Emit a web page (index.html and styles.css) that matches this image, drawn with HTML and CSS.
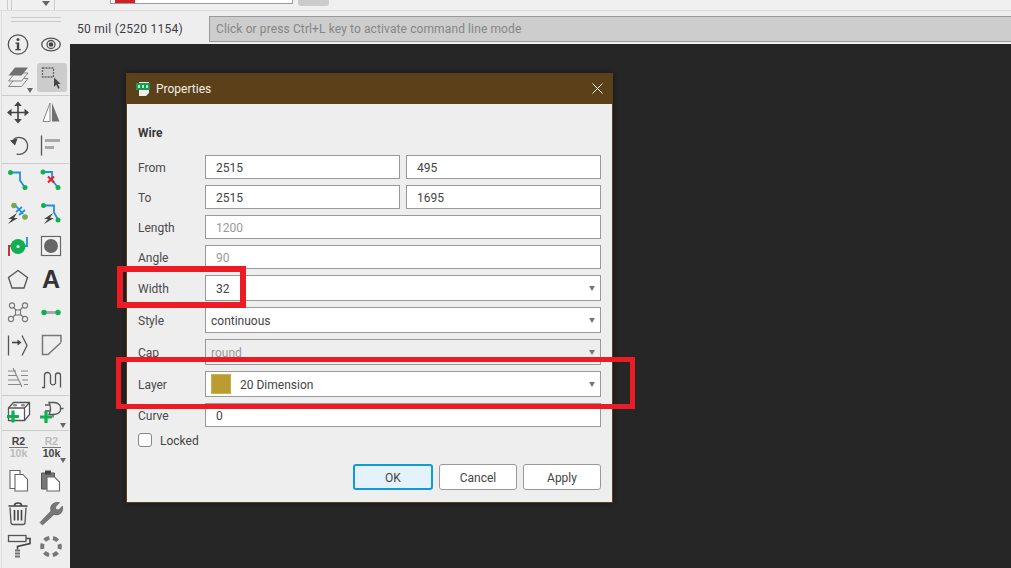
FILE: index.html
```html
<!DOCTYPE html>
<html lang="en">
<head>
<meta charset="utf-8">
<title>Properties</title>
<link rel="stylesheet" href="styles.css">
</head>
<body>
<header class="topbar">
  <div class="top-left"><i class="vbar"></i><i class="vbar"></i><i class="tri top-tri"></i><i class="vbar"></i></div>
  <div class="top-select"><i class="top-swatch"></i></div>
  <div class="top-btn"></div>
</header>
<div class="main">
  <aside class="sidebar">
    <div class="grip"></div>
    <div class="group">
      <div class="tool"><svg viewBox="0 0 33 33"><circle class="ln" cx="16" cy="16.500" r="9.700"/><circle class="fd" cx="16" cy="11.500" r="1.500"/><path class="fd" d="M13.500 14.500h3.700v6.500h1.500v1.200h-5.400V21h1.500v-5.300h-1.300z"/></svg></div>
      <div class="tool"><svg viewBox="0 0 33 33"><ellipse class="ln" cx="16" cy="16.500" rx="9.300" ry="6.300"/><circle class="ln" cx="16" cy="16.500" r="4"/><circle class="fd" cx="16" cy="16.500" r="2.300"/></svg></div>
      <div class="tool tool-more"><svg viewBox="0 0 33 33"><path class="lt" d="M6.500 25.500L13 17.500H26L19.500 25.500z"/><path class="lt" d="M6.500 20L13 12H26L19.500 20z"/><path class="fa" d="M6.500 14.500L13 6.500H26L19.500 14.500z"/></svg><i class="tri"></i></div>
      <div class="tool tool-active"><svg viewBox="0 0 33 33"><rect class="dash" x="7.500" y="7" width="11" height="9"/><path class="fd" d="M19 16.500v9.500l2.200-2.200 2.200 4 1.300-.7-2-4h3z"/></svg></div>
    </div>
    <div class="group">
      <div class="tool"><svg viewBox="0 0 33 33"><path class="ln2" d="M16 7v19M6.500 16.500h19"/><path class="fd" d="M16 5.500l3.800 4.500h-7.600zM16 27.500l3.800-4.500h-7.600zM5 16.500l4.500-3.800v7.600zM27 16.500l-4.500-3.800v7.600z"/></svg></div>
      <div class="tool"><svg viewBox="0 0 33 33"><path class="lt2" d="M15 7L8 25.500h7z"/><path class="fa" d="M17 7l7.500 18.500H17z"/></svg></div>
      <div class="tool"><svg viewBox="0 0 33 33"><path class="ln" d="M11.500 10.500a8.500 8.500 0 1 1 3 14.500"/><path class="fd" d="M8 11.500l7.500-2-2.500 7z"/></svg></div>
      <div class="tool"><svg viewBox="0 0 33 33"><path class="ln" d="M6.500 6.500v20"/><path class="bar" d="M10 11.500h15M10 18.500h9"/></svg></div>
    </div>
    <div class="group group-tight">
      <div class="tool"><svg viewBox="0 0 33 33"><path class="wire" d="M8.500 8.500H18v8l5 7"/><circle class="gd" cx="8.500" cy="8.500" r="2.500"/><circle class="gd" cx="23" cy="23.500" r="2.500"/></svg></div>
      <div class="tool"><svg viewBox="0 0 33 33"><path class="wire" d="M8 8h9v8l6 7.500"/><circle class="gd" cx="8" cy="8" r="2.500"/><circle class="gd" cx="23" cy="23.500" r="2.500"/><path class="rx" d="M13 12.500l6 6M19 12.500l-6 6"/></svg></div>
      <div class="tool"><svg viewBox="0 0 33 33"><path class="wire" d="M14 9l7 8"/><path class="wire" d="M14 15l6-5M17 18l6-5"/><circle class="ol" cx="12" cy="8.500" r="2.800"/><circle class="ol" cx="23" cy="20" r="2.800"/><path class="fd" d="M15 16l-9 6h4l-4 5 10-6h-4z"/></svg></div>
      <div class="tool"><svg viewBox="0 0 33 33"><path class="wire" d="M8.500 8.500H19v7l4 7"/><circle class="gd" cx="8.500" cy="8.500" r="2.500"/><circle class="gd" cx="23" cy="23" r="2.500"/><path class="fd" d="M18 16l-9 6h4l-4 5 10-6h-4z"/></svg></div>
      <div class="tool"><svg viewBox="0 0 33 33"><path class="redw" d="M7 26v-10h4"/><path class="wire" d="M25 7v9h-4"/><circle class="gd" cx="16" cy="16.500" r="7.500"/><circle class="wd" cx="16" cy="16.500" r="1.500"/></svg></div>
      <div class="tool"><svg viewBox="0 0 33 33"><rect class="pad" x="6.500" y="6.500" width="19" height="19"/><circle class="padc" cx="16" cy="16" r="7"/></svg></div>
      <div class="tool"><svg viewBox="0 0 33 33"><path class="ln" d="M16 7.500l9.500 7-3.500 10.500H10L6.500 14.500z"/></svg></div>
      <div class="tool"><svg viewBox="0 0 33 33"><text class="big-a" x="16" y="25">A</text></svg></div>
      <div class="tool"><svg viewBox="0 0 33 33"><path class="ln-n" d="M10 10l12 12M22 10L10 22"/><rect class="cb" x="13.500" y="14" width="5" height="5"/><circle class="cb" cx="10" cy="9.500" r="2.600"/><circle class="cb" cx="23" cy="9.500" r="2.600"/><circle class="cb" cx="9" cy="23" r="2.600"/><circle class="cb" cx="23" cy="23" r="2.600"/></svg></div>
      <div class="tool"><svg viewBox="0 0 33 33"><path class="bar" d="M9 16.500h14"/><circle class="gd" cx="9" cy="16.500" r="2.700"/><circle class="gd" cx="23" cy="16.500" r="2.700"/></svg></div>
      <div class="tool"><svg viewBox="0 0 33 33"><path class="ln" d="M6.500 6.500v20M20 6.500l5 10-5 10"/><path class="ln2" d="M10 13.500h7"/><path class="fd" d="M19.500 13.500l-4-3v6z"/></svg></div>
      <div class="tool"><svg viewBox="0 0 33 33"><path class="ln-g" d="M26 13V6.500H7.500v19H13l13-12"/></svg></div>
      <div class="tool"><svg viewBox="0 0 33 33"><path class="ln-s" d="M6 9h8M19 9h7M6 13.500h8M19 13.500h7M6 18h10M20 18h6M6 22.500h12M22 22.500h4M11 6l9 19"/></svg></div>
      <div class="tool"><svg viewBox="0 0 33 33"><path class="ln" d="M7 25.500h2.500v-12a3 3 0 0 1 6 0v8a3 3 0 0 0 5 0v-8a2.500 2.500 0 0 1 5 0v12"/></svg></div>
    </div>
    <div class="group">
      <div class="tool"><svg viewBox="0 0 33 33"><path class="chip" d="M6.500 12l5-5.500h16v12l-5 6h-16z"/><path class="ln" d="M6.500 12h16v13M22.500 12l5-5.500"/><ellipse class="hole" cx="13" cy="9.300" rx="2.200" ry="1.300"/><ellipse class="hole" cx="21" cy="9.300" rx="2.200" ry="1.300"/><path class="plus" d="M11 14.500v12M5 20.500h12"/></svg></div>
      <div class="tool tool-more"><svg viewBox="0 0 33 33"><path class="ln" d="M14 6.500h5a7 5 0 0 1 6.500 6 7 5 0 0 1-6.500 6h-5q3-6 0-12z"/><path class="ln" d="M10 9h5M10 15h5M25.500 12.500h3M18 18.500v3"/><path class="plus" d="M11 15v12M5 21h12"/></svg><i class="tri"></i></div>
    </div>
    <div class="group group-last">
      <div class="tool"><div class="rk"><b class="rk-on">R2</b><b class="rk-off rk-rule">10k</b></div></div>
      <div class="tool tool-more"><div class="rk"><b class="rk-off">R2</b><b class="rk-on rk-rule">10k</b></div><i class="tri"></i></div>
      <div class="tool"><svg viewBox="0 0 33 33"><path class="page" d="M8 6.500h10v18H8z"/><path class="page" d="M13 10.500h8l4.500 5V27H13z"/></svg></div>
      <div class="tool"><svg viewBox="0 0 33 33"><path class="clip" d="M6.500 9h13v16h-13z"/><path class="fd" d="M10 6.500h6v4h-6z"/><path class="page" d="M12 13h7.500l5 5v9H12z"/></svg></div>
      <div class="tool"><svg viewBox="0 0 33 33"><path class="ln" d="M8 10.500l1 15q0 2 2 2h10q2 0 2-2l1-15"/><path class="ln2" d="M6.500 9h19M12.500 8.500q0-2.500 3.500-2.500t3.500 2.500M12.500 13v10.500M16 13v10.500M19.500 13v10.500"/></svg></div>
      <div class="tool"><svg viewBox="0 0 33 33"><path class="wrench" d="M7.500 28l-2.500-2.500L16 14q-1.500-4.500 1.500-7t7-1.500L20.500 10l.5 2.500 2.500.5 4-4q1 4-1.500 7t-7 1.500z"/></svg></div>
      <div class="tool"><svg viewBox="0 0 33 33"><rect class="ln" x="6.500" y="5.500" width="17.500" height="6"/><path class="ln2" d="M24 8.500h4v5l-12.500 3v3"/><path class="fa" d="M13 19.500h5v8h-5z"/><path class="gapl" d="M13 22h5M13 25h5"/></svg></div>
      <div class="tool"><svg viewBox="0 0 33 33"><circle class="ring" cx="16" cy="16.500" r="8.800"/></svg></div>
    </div>
  </aside>
  <div class="workspace">
    <div class="statusbar">
      <span class="coords">50 mil (2520 1154)</span>
      <div class="cmdline">Click or press Ctrl+L key to activate command line mode</div>
    </div>
    <div class="canvas">
      <section class="dialog">
        <div class="titlebar">
          <svg class="app-ico" viewBox="0 0 14 16"><path class="ai-page" d="M3 1h10v11l-3 3H3z"/><rect class="ai-board" x="0" y="2" width="14" height="7"/><path class="ai-trace" d="M2 4v3h2V4zM6 4v3h2V4zM10 4v3h2V4z"/></svg>
          <span class="title">Properties</span>
          <svg class="close" viewBox="0 0 11 11"><path d="M.5.5l10 10M10.500.5l-10 10"/></svg>
        </div>
        <div class="dbody">
          <h2 class="heading">Wire</h2>
          <div class="form">
            <label>From</label><div class="pair"><div class="field">2515</div><div class="field">495</div></div>
            <label>To</label><div class="pair"><div class="field">2515</div><div class="field">1695</div></div>
            <label>Length</label><div class="field off">1200</div>
            <label>Angle</label><div class="field off">90</div>
            <label>Width</label><div class="field combo">32<i class="tri"></i></div>
            <label>Style</label><div class="field combo tight">continuous<i class="tri"></i></div>
            <label>Cap</label><div class="field combo tight off off-fill">round<i class="tri"></i></div>
            <label>Layer</label><div class="field combo tight"><i class="swatch"></i>20 Dimension<i class="tri"></i></div>
            <label>Curve</label><div class="field">0</div>
          </div>
          <div class="lock"><i class="check"></i><span class="lock-text">Locked</span></div>
          <div class="actions">
            <button class="btn btn-ok">OK</button>
            <button class="btn">Cancel</button>
            <button class="btn">Apply</button>
          </div>
        </div>
      </section>
      <div class="mark mark-width"></div>
      <div class="mark mark-layer"></div>
    </div>
  </div>
</div>
</body>
</html>
```
FILE: styles.css
```css
* { box-sizing: border-box; }
html, body { margin: 0; height: 100%; overflow: hidden; }
body {
  display: flex;
  flex-direction: column;
  width: 1011px;
  height: 568px;
  background: #eee;
  color: #444;
  font: 12px Roboto, "Noto Sans", sans-serif;
}
i { display: block; }

.topbar { height: 11px; flex: none; display: flex; background: #f0f0f0; border-bottom: 1px solid #ddd; overflow: hidden; }
.top-left { width: 110px; display: flex; position: relative; }
.vbar { position: absolute; top: 0; height: 10px; width: 1px; background: #ccc; }
.vbar:nth-child(1) { left: 7px; }
.vbar:nth-child(2) { left: 11px; }
.vbar:nth-child(4) { left: 54px; }
.top-tri { position: absolute; left: 42px; top: 1px; }
.top-select { width: 183px; height: 4px; background: #fff; border: 1px solid #999; border-top: 0; padding-left: 4px; }
.top-swatch { width: 20px; height: 3px; background: #d02020; }
.top-btn { width: 31px; height: 6px; margin-left: 5px; background: #ccc; border-radius: 0 0 3px 3px; }

.tri { width: 0; height: 0; border-left: 4px solid transparent; border-right: 4px solid transparent; border-top: 5px solid #666; }

.main { flex: 1; display: flex; min-height: 0; }

.sidebar { width: 69px; flex: none; padding: 0 1px 0 2px; background: #eee; border-left: 1px solid #ddd; margin-left: 1px; display: flex; flex-direction: column; align-items: stretch; }
.grip { height: 11px; flex: none; margin-top: 6px; margin-right: 8px; margin-left: 7px; border-top: 1px solid #ccc; }
.grip::after { content: ""; display: block; margin-top: 3px; border-top: 1px solid #ccc; }
.group { display: grid; width: 67px; grid-template-columns: 33px 33px; grid-auto-rows: 33px; border-bottom: 1px solid #ccc; margin-left: -2px; padding-bottom: 1px; }
.group-tight { padding-bottom: 0; }
.group-last { border: 0; }

.tool { position: relative; display: flex; align-items: center; justify-content: center; }
.tool svg { width: 33px; height: 33px; display: block; flex: none; }
.tool-more > .tri { position: absolute; right: 2px; bottom: 1px; border-left-width: 3px; border-right-width: 3px; border-top-width: 5px; }
.tool-active::before { content: ""; position: absolute; inset: 2px 1px 2px 2px; background: #ccc; border-radius: 3px; }
.tool-active svg { position: relative; }

.ln, .ln2, .lt, .lt2, .wire, .redw, .rx, .bar, .ln-g, .ln-s, .ln-n, .dash, .gapl, .plus { fill: none; }
.ln { stroke: #555; stroke-width: 1.300; }
.ln2 { stroke: #444; stroke-width: 1.600; }
.ln-n { stroke: #777; stroke-width: 1.100; }
.lt, .lt2 { stroke: #888; stroke-width: 1; }
.lt { fill: #eee; }
.lt2 { fill: #fff; }
.fd { fill: #444; }
.fa { fill: #707070; }
.dash { stroke: #666; stroke-width: 1.300; stroke-dasharray: 2 1; }
.bar { stroke: #a8a8a8; stroke-width: 3; }
.wire { stroke: #1e90e6; stroke-width: 1.800; }
.redw { stroke: #c8323c; stroke-width: 2; }
.rx { stroke: #e02030; stroke-width: 2; }
.gd { fill: #10b050; }
.ol { fill: #78a850; }
.wd { fill: #fff; }
.pad { fill: #f4f4f4; stroke: #666; stroke-width: 1.200; }
.padc { fill: #666; }
.big-a { font: bold 25px "Liberation Sans", sans-serif; fill: #333; text-anchor: middle; }
.cb { fill: #eee; stroke: #777; stroke-width: 1.100; }
.ln-g { stroke: #777; stroke-width: 1.500; }
.ln-s { stroke: #888; stroke-width: 1.100; }
.chip { fill: #fff; stroke: #555; stroke-width: 1.300; }
.hole { fill: #888; }
.plus { stroke: #10b050; stroke-width: 3.200; }
.page { fill: #fff; stroke: #666; stroke-width: 1.100; }
.clip { fill: #777; stroke: #555; stroke-width: 1; }
.wrench { fill: #777; stroke: #555; stroke-width: .6; }
.gapl { stroke: #eee; stroke-width: 1; }
.ring { fill: none; stroke: #777; stroke-width: 4; stroke-dasharray: 5.400 3.800; stroke-dashoffset: 2.700; }

.rk { display: flex; flex-direction: column; align-items: center; font: bold 10.500px/11px "Liberation Sans", sans-serif; }
.rk b { display: block; padding: 0 1px; }
.rk-on { color: #444; }
.rk-off { color: #bbb; }
.rk-rule { border-top: 1px solid #777; min-width: 16px; text-align: center; }

.workspace { flex: 1; min-width: 0; display: flex; flex-direction: column; }
.statusbar { height: 33px; flex: none; display: flex; align-items: center; padding: 3px 0 0 7px; background: #eee; }
.coords { width: 132px; flex: none; color: #3c3c46; letter-spacing: .28px; }
.cmdline { flex: 1; height: 26px; padding: 0 6px; line-height: 25px; background: #cdcdcd; border: 1px solid #999; border-right: 0; color: #858585; letter-spacing: .11px; }

.canvas { flex: 1; position: relative; background: #262626; }

.dialog { position: absolute; left: 56px; top: 29px; width: 487px; height: 430px; background: #eee; border: 1px solid #5c4019; box-shadow: 0 0 6px rgba(0,0,0,.45); display: flex; flex-direction: column; }
.titlebar { height: 30px; flex: none; display: flex; align-items: center; padding: 0 9px; background: #5c4019; color: #fff; }
.app-ico { width: 14px; height: 16px; flex: none; margin-right: 6px; }
.ai-page { fill: #eee; }
.ai-board { fill: #1a9a50; }
.ai-trace { fill: #bfe6cc; }
.title { flex: 1; color: #f4efe6; }
.close { width: 11px; height: 11px; margin-top: -2px; fill: none; stroke: #fff; stroke-width: 1; }

.dbody { flex: 1; position: relative; padding: 21px 11px 12px; display: flex; flex-direction: column; }
.heading { margin: 0 0 13px; font-size: 12px; line-height: 17px; font-weight: bold; color: #3a3a3a; }
.form { display: grid; grid-template-columns: 67px 396px; grid-template-rows: 24px 24px 24px 24px 26px 26px 26px 26px 24px; row-gap: 6px; align-items: center; }
.form label { padding-top: 2px; line-height: 17px; color: #4a4a4a; }
.pair { display: grid; grid-template-columns: 195px 195px; column-gap: 6px; }
.field { height: 100%; min-height: 24px; display: flex; align-items: center; padding: 2px 10px 0; background: #fff; border: 1px solid #999; color: #444; position: relative; }
.field.off { color: #999; }
.field.off-fill { background: #eee; }
.combo { height: 26px; }
.field.tight { padding-left: 5px; }
.combo .tri { position: absolute; right: 5px; top: 10px; border-left-width: 3px; border-right-width: 3px; border-top-color: #777; }
.swatch { width: 20px; height: 20px; margin: -2px 9px 0 0; background: #bb9c33; border: 1px solid #ccb040; }
.lock { display: flex; align-items: center; height: 14px; margin-top: 6px; }
.check { width: 14px; height: 14px; margin-right: 8px; background: #fff; border: 1px solid #888; border-radius: 3px; }
.lock-text { padding-top: 2px; }
.actions { display: flex; justify-content: flex-end; gap: 6px; margin-top: 17px; }
.btn { width: 78px; height: 26px; padding: 2px 0 0; background: #fff; border: 1px solid #999; border-radius: 3px; font: inherit; color: #444; }
.btn-ok { width: 80px; background: #e4f3fb; border: 2px solid #0f9ad8; }

.mark { position: absolute; border: 6px solid #ed1c24; pointer-events: none; }
.mark-width { left: 47px; top: 222px; width: 129px; height: 42px; }
.mark-layer { left: 46px; top: 313px; width: 519px; height: 52px; border-width: 5px; }
```
